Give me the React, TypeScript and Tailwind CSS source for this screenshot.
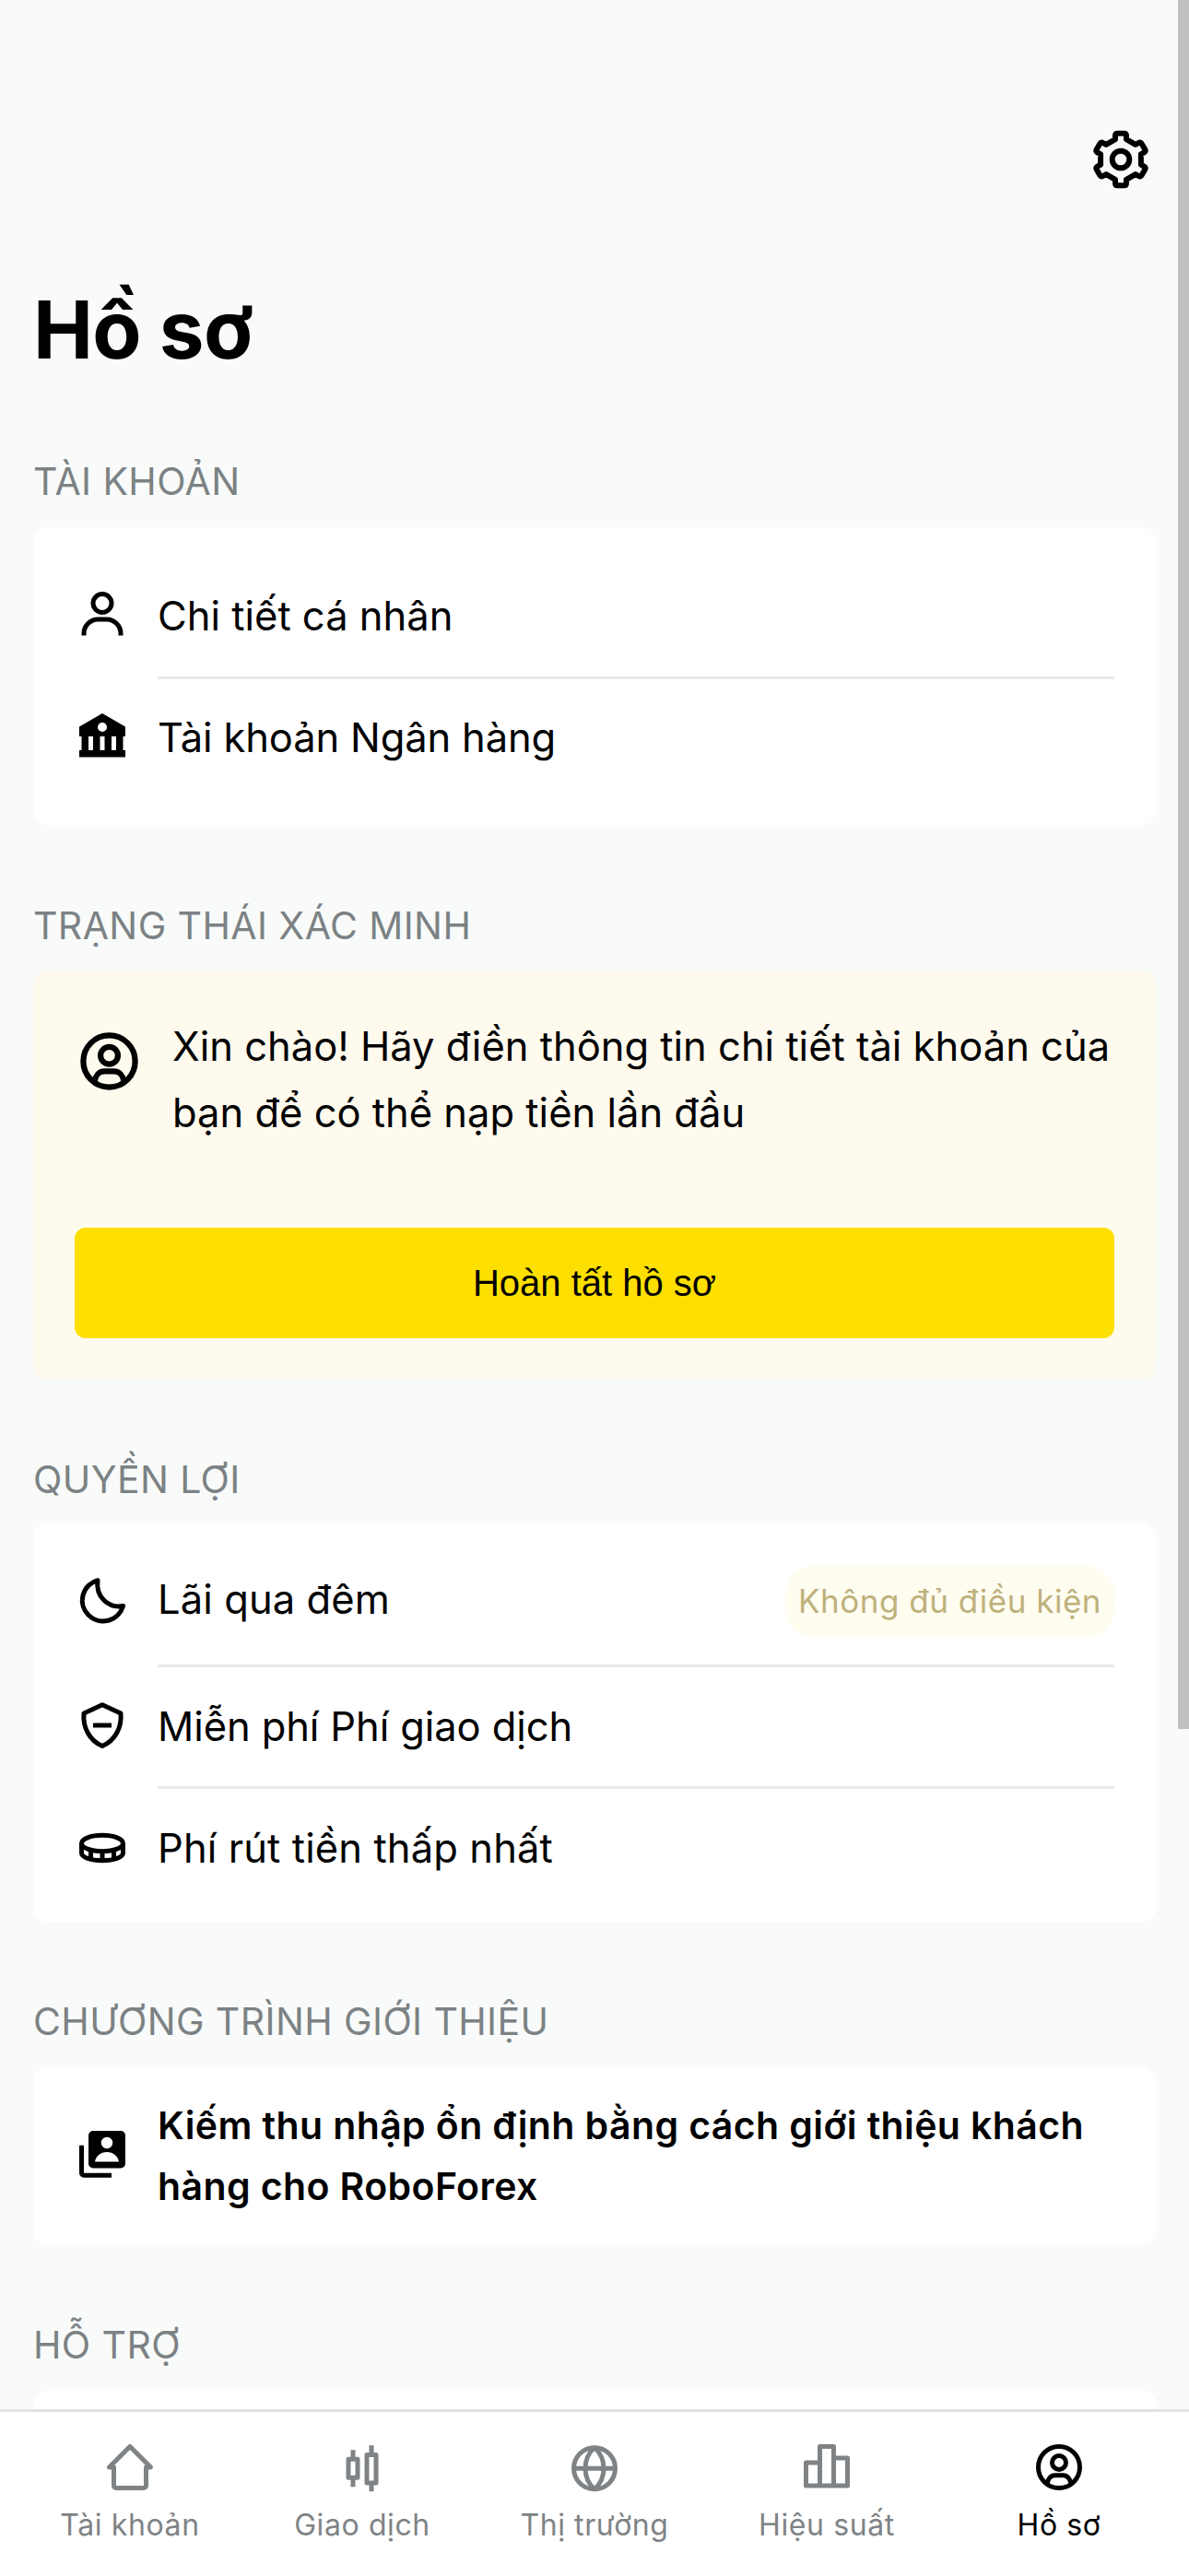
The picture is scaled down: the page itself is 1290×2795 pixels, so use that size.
import type { ReactNode } from "react";

type IconProps = { className?: string };

function Glyph({ className = "size-[60px]", children }: { className?: string; children: ReactNode }) {
  return (
    <svg
      viewBox="0 0 24 24"
      fill="none"
      stroke="currentColor"
      strokeWidth="2"
      strokeLinejoin="round"
      className={`shrink-0 ${className}`}
    >
      {children}
    </svg>
  );
}

function GearIcon() {
  return (
    <svg viewBox="-36 -36 72 72" fill="none" stroke="currentColor" strokeWidth="6" className="size-[72px] shrink-0">
      <path
        strokeLinejoin="round"
        d="M-3.5-28.2H3.5Q6-28.2 6-25.7V-21.8L15.9-16.1L19.3-18Q21.5-19.3 22.7-17.1L26.2-11.1Q27.4-8.9 25.3-7.7L21.9-5.7V5.7L25.3 7.7Q27.4 8.9 26.2 11.1L22.7 17.1Q21.5 19.3 19.3 18L15.9 16.1L6 21.8V25.7Q6 28.2 3.5 28.2H-3.5Q-6 28.2-6 25.7V21.8L-15.9 16.1L-19.3 18Q-21.5 19.3-22.7 17.1L-26.2 11.1Q-27.4 8.9-25.3 7.7L-21.9 5.7V-5.7L-25.3-7.7Q-27.4-8.9-26.2-11.1L-22.7-17.1Q-21.5-19.3-19.3-18L-15.9-16.1L-6-21.8V-25.7Q-6-28.2-3.5-28.2Z"
      />
      <circle r="9.3" />
    </svg>
  );
}

const PersonIcon = () => (
  <Glyph className="mb-[1px] size-[60px]">
    <circle cx="12" cy="7" r="4" />
    <path d="M4 21v-.8A6.2 6.2 0 0 1 10.2 14h3.6a6.2 6.2 0 0 1 6.2 6.2v.8" />
  </Glyph>
);

const BankIcon = () => (
  <Glyph className="mb-[1px] size-[60px]">
    <path
      fill="currentColor"
      stroke="none"
      fillRule="evenodd"
      d="M12 2l10 5.8V12h-1v6h1v3H2v-3h1v-6H2V7.8zM12 6a2 2 0 1 0 0 4 2 2 0 0 0 0-4zM6 12v6h2v-6zM11 12v6h2v-6zM16 12v6h2v-6z"
    />
  </Glyph>
);

const AccountCircleIcon = ({ className }: IconProps) => (
  <Glyph className={className}>
    <circle cx="12" cy="12" r="9" />
    <circle cx="12" cy="10" r="3" />
    <path d="M6.9 19c.3-2 1.6-3.5 3.4-3.5h3.4c1.8 0 3.1 1.5 3.4 3.5" />
  </Glyph>
);

const MoonIcon = () => (
  <Glyph>
    <path d="M10 3.1A9 9 0 1 0 21 14.2C14.8 15.4 9 10.3 10 3.1z" />
  </Glyph>
);

const ShieldIcon = () => (
  <Glyph className="mb-[3px] size-[60px]">
    <path d="M12 3.1L20 6.8C20.5 13 17.6 18.6 12 21C6.4 18.6 3.5 13 4 6.8z" />
    <path d="M8 12h8" />
  </Glyph>
);

const CoinIcon = () => (
  <Glyph>
    <ellipse cx="12" cy="10" rx="9" ry="3.5" />
    <path d="M3 10v4.2c0 1.9 4 3.3 9 3.3s9-1.4 9-3.3V10M7 13v4M12 13.5v4M17 13v4" />
  </Glyph>
);

const ContactsIcon = () => (
  <Glyph>
    <g fill="currentColor" stroke="none">
      <path
        fillRule="evenodd"
        d="M8 2h12a2 2 0 0 1 2 2v12.2a2 2 0 0 1-2 2H8a2 2 0 0 1-2-2V4a2 2 0 0 1 2-2zM14 4.7a2.5 2.5 0 1 0 0 5 2.5 2.5 0 0 0 0-5zM8.8 15.4h10.4c-.4-2.4-2.5-4.2-5.2-4.2s-4.8 1.8-5.2 4.2z"
      />
      <path d="M2 8.3h2v12h12v2H4a2 2 0 0 1-2-2z" />
    </g>
  </Glyph>
);

const HomeIcon = () => (
  <Glyph>
    <path strokeLinecap="round" d="M5 12H3l9-9 9 9h-2v8a1 1 0 0 1-1 1H6a1 1 0 0 1-1-1z" />
  </Glyph>
);

const CandlesIcon = () => (
  <Glyph>
    <path d="M8 4.5v4M8 16.5v4M16 2.5v4M16 18.5v4" />
    <rect x="6" y="8.5" width="4" height="8" />
    <rect x="14" y="6.6" width="4" height="12.2" />
  </Glyph>
);

const GlobeIcon = () => (
  <Glyph>
    <circle cx="12" cy="12.5" r="9" />
    <path d="M3 12.5h18M12 3.5c-2.6 2.3-4 5.5-4 9s1.4 6.7 4 9c2.6-2.3 4-5.5 4-9s-1.4-6.7-4-9z" />
  </Glyph>
);

const BarsIcon = () => (
  <Glyph>
    <path d="M9 20V10H3v10h18V8h-6M9 10V3h6v17" />
  </Glyph>
);

function SectionTitle({ children, className = "mt-[78px] mb-5" }: { children: ReactNode; className?: string }) {
  return (
    <h2 className={`h-[60px] shrink-0 text-[41px] leading-[60px] tracking-[0.4px] text-[#7c8284] ${className}`}>
      {children}
    </h2>
  );
}

function Card({ children, className = "" }: { children?: ReactNode; className?: string }) {
  return <div className={`shrink-0 rounded-[15px] px-[45px] ${className}`}>{children}</div>;
}

function Row({
  icon,
  label,
  className,
  labelClass = "",
  badge,
}: {
  icon: ReactNode;
  label: string;
  className: string;
  labelClass?: string;
  badge?: string;
}) {
  return (
    <div className={`flex items-center ${className}`}>
      {icon}
      <span className={`ml-[30px] text-[43.5px] leading-[60px] ${labelClass}`}>{label}</span>
      {badge && (
        <span className="mt-[2px] ml-auto flex h-[77px] w-[357px] items-center justify-center rounded-[30px] bg-[#fffcf0] text-[35px] leading-none tracking-[0.5px] text-[#beb17c]">
          {badge}
        </span>
      )}
    </div>
  );
}

const Divider = () => <div className="ml-[90px] h-[3px] bg-[#e9e9e9]" />;

const tabs = [
  { label: "Tài khoản", icon: <HomeIcon /> },
  { label: "Giao dịch", icon: <CandlesIcon /> },
  { label: "Thị trường", icon: <GlobeIcon /> },
  { label: "Hiệu suất", icon: <BarsIcon /> },
  { label: "Hồ sơ", icon: <AccountCircleIcon />, active: true },
];

export default function App() {
  return (
    <div className="relative flex h-[2795px] w-[1290px] flex-col overflow-hidden bg-[#f9fbfa] font-['Inter',sans-serif] text-black">
      <main className="flex min-h-0 flex-1 flex-col overflow-hidden px-9">
        <header className="flex h-[310px] shrink-0 justify-end pt-[137px] pr-[2px]">
          <GearIcon />
        </header>
        <h1 className="shrink-0 text-[87px] leading-[96px] font-bold tracking-[-0.7px]">Hồ sơ</h1>

        <SectionTitle className="mt-[86px] mb-5">TÀI KHOẢN</SectionTitle>
        <Card className="h-[323px] bg-white pt-[29px]">
          <Row className="h-[133px]" icon={<PersonIcon />} label="Chi tiết cá nhân" />
          <Divider />
          <Row className="h-[125px]" icon={<BankIcon />} label="Tài khoản Ngân hàng" labelClass="tracking-[-0.15px]" />
        </Card>

        <SectionTitle className="mt-[79px] mb-[19px]">TRẠNG THÁI XÁC MINH</SectionTitle>
        <Card className="h-[444px] bg-[#fffaee] pt-[46px]">
          <div className="flex items-start">
            <AccountCircleIcon className="mt-[15px] size-[75px]" />
            <p className="ml-[31px] text-[43.5px] leading-[72px] whitespace-nowrap">
              Xin chào! Hãy điền thông tin chi tiết tài khoản của
              <br />
              bạn để có thể nạp tiền lần đầu
            </p>
          </div>
          <button className="mt-[89px] block h-[120px] w-full rounded-[12px] bg-[#fedf02] font-['Liberation_Sans',sans-serif] text-[40px]">
            Hoàn tất hồ sơ
          </button>
        </Card>

        <SectionTitle className="mt-[78px] mb-[18px]">QUYỀN LỢI</SectionTitle>
        <Card className="h-[432px] bg-white pt-[14px]">
          <Row
            className="h-[139px]"
            icon={<MoonIcon />}
            label="Lãi qua đêm"
            labelClass="mb-[3px] tracking-[0.1px]"
            badge="Không đủ điều kiện"
          />
          <Divider />
          <Row
            className="h-[129px]"
            icon={<ShieldIcon />}
            label="Miễn phí Phí giao dịch"
            labelClass="mb-[2px] tracking-[-0.1px]"
          />
          <Divider />
          <Row className="h-[127px]" icon={<CoinIcon />} label="Phí rút tiền thấp nhất" labelClass="tracking-[0.12px]" />
        </Card>

        <SectionTitle>CHƯƠNG TRÌNH GIỚI THIỆU</SectionTitle>
        <Card className="h-[193px] bg-white pt-[30px]">
          <div className="flex items-start">
            <div className="mt-[34px] flex">
              <ContactsIcon />
            </div>
            <p className="ml-[30px] text-[41px] leading-[66px] font-semibold tracking-[0.4px] whitespace-nowrap">
              Kiếm thu nhập ổn định bằng cách giới thiệu khách
              <br />
              hàng cho RoboForex
            </p>
          </div>
        </Card>

        <SectionTitle>HỖ TRỢ</SectionTitle>
        <Card className="h-[323px] bg-white" />
      </main>

      <nav className="flex h-[181px] shrink-0 border-t-[3px] border-[#e3e2e3] bg-white px-[15px] pt-[30px]">
        {tabs.map((tab) => (
          <a
            key={tab.label}
            className={`flex w-[252px] flex-col items-center ${tab.active ? "text-black" : "text-[#7f8385]"}`}
          >
            {tab.icon}
            <span className="mt-[13px] text-[32px] leading-[39px] tracking-[0.6px]">{tab.label}</span>
          </a>
        ))}
      </nav>

      <div className="absolute top-0 right-0 h-[1876px] w-3 bg-[#bfc0bf]" />
    </div>
  );
}
